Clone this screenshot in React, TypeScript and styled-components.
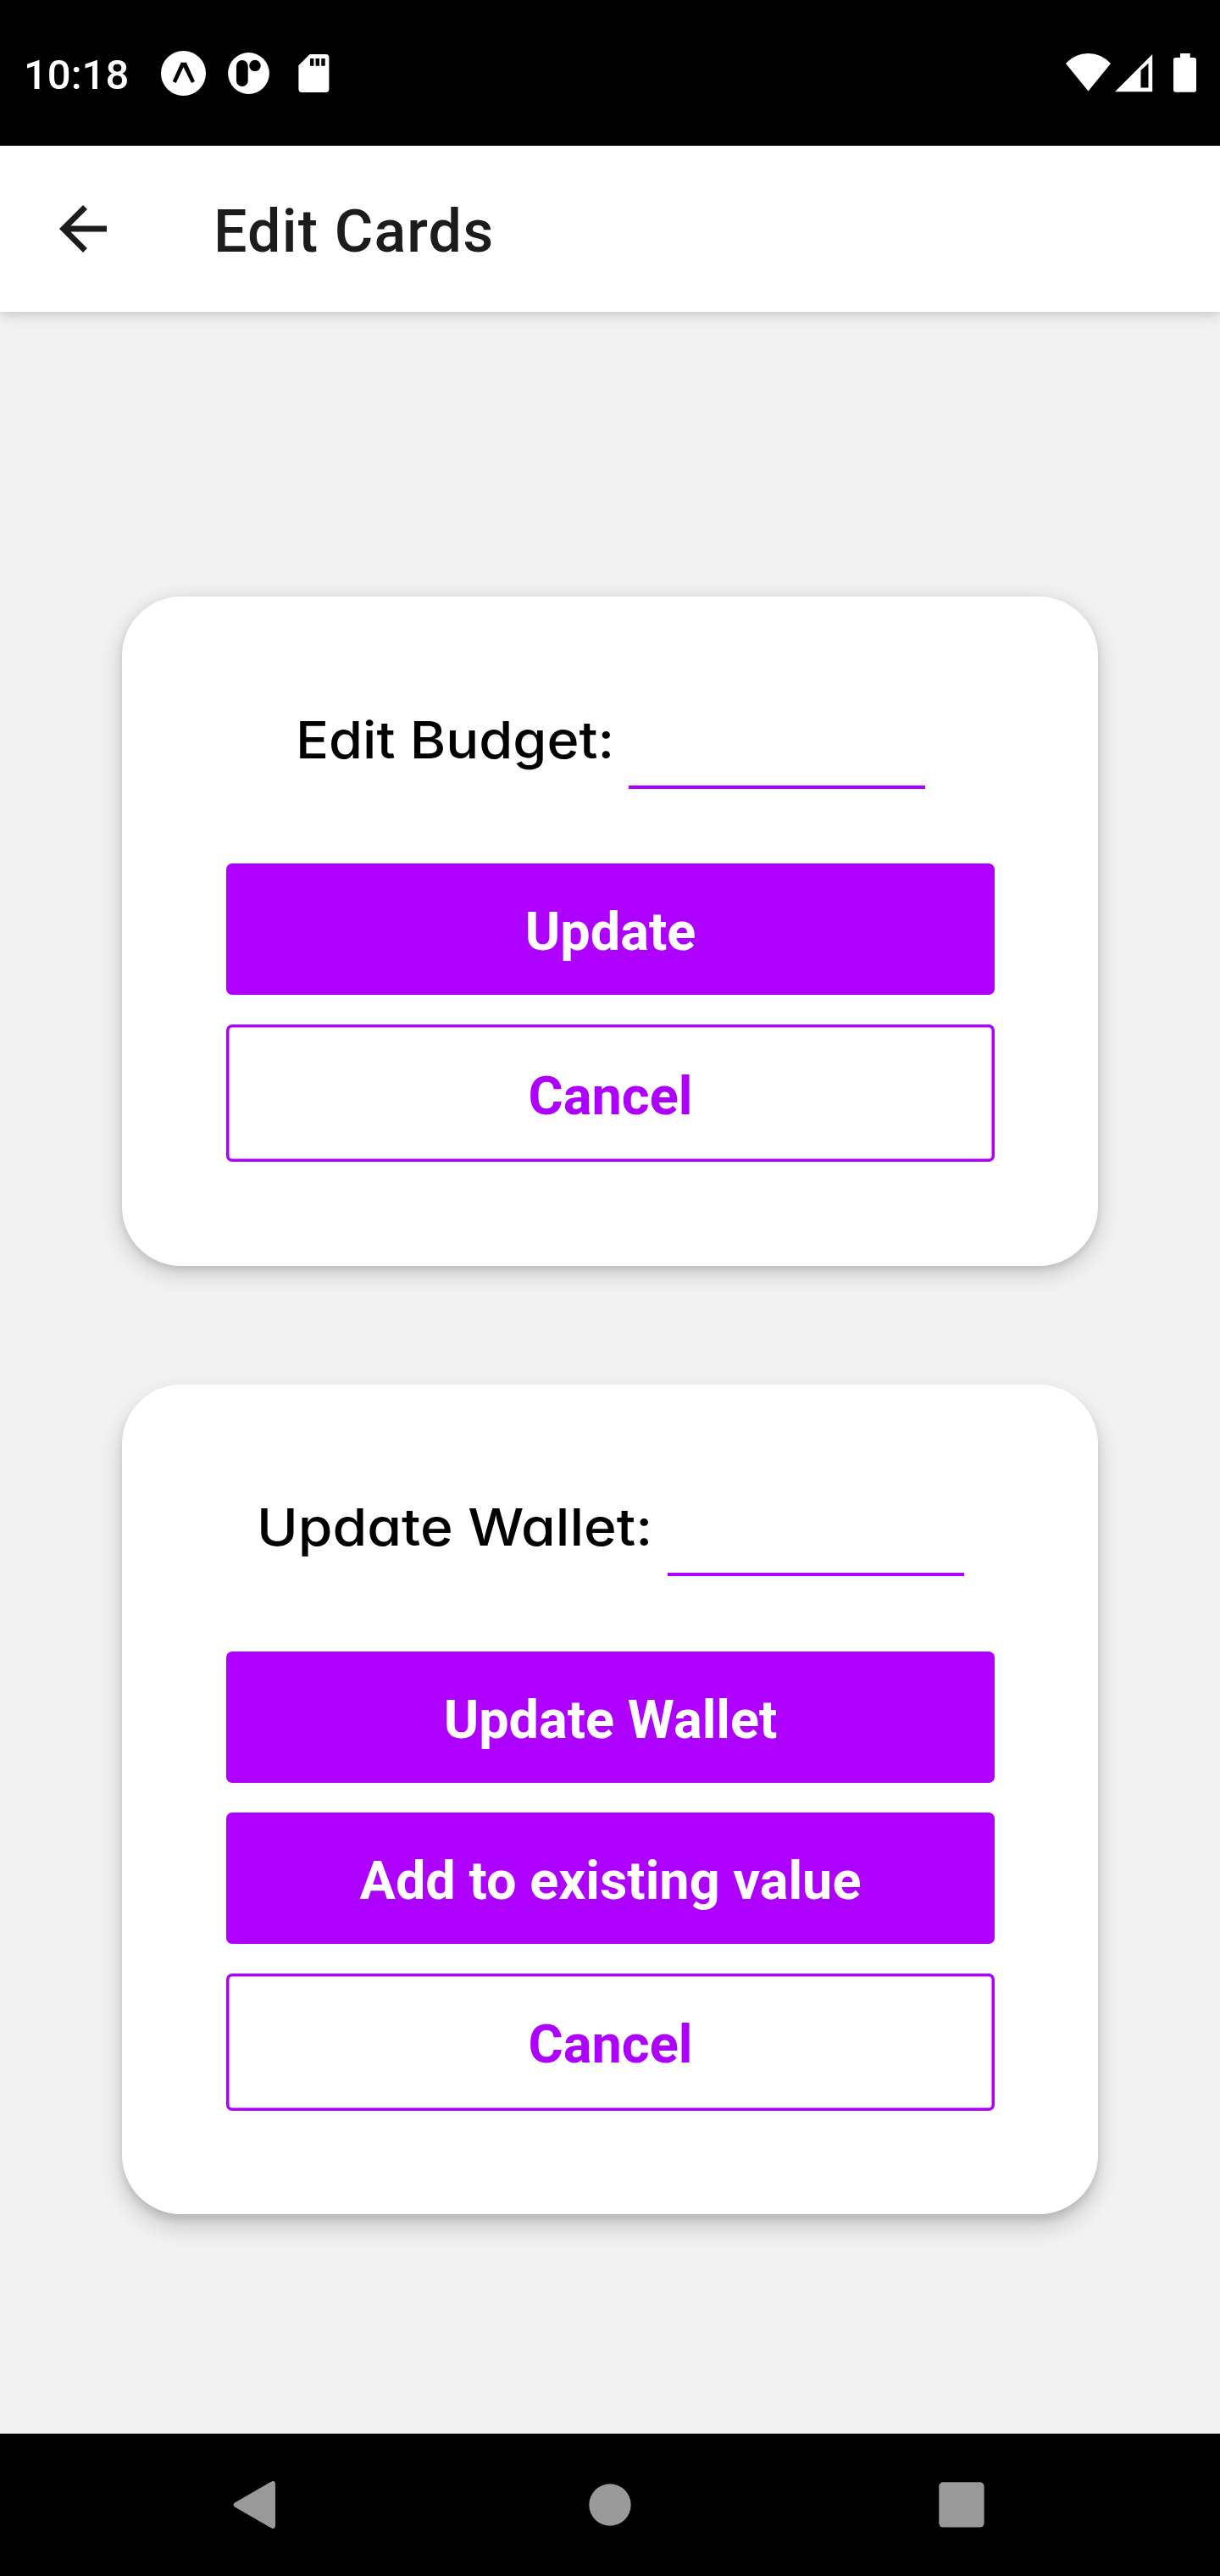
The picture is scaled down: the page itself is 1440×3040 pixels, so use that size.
import React from "react";
import styled, { createGlobalStyle } from "styled-components";

const purple = "#ad00ff";

const GlobalStyle = createGlobalStyle`
  * { box-sizing: border-box; }
  body { margin: 0; background: #f2f2f2; font-family: Roboto, sans-serif; }
`;

const Screen = styled.div`
  display: flex;
  flex-direction: column;
  width: 1440px;
  height: 3040px;
  background: #f2f2f2;
  overflow: hidden;
`;

const StatusBar = styled.div`
  display: flex;
  justify-content: space-between;
  height: 172px;
  padding: 60px 27px 0 28px;
  background: #000;
`;

const StatusGroup = styled.div`
  display: flex;
  align-items: flex-start;
`;

const Clock = styled.span`
  width: 162px;
  color: #fff;
  font-size: 49px;
  font-weight: 500;
  line-height: 57px;
`;

const Glyph = styled.svg<{ $left?: number; $top?: number }>`
  display: block;
  flex: none;
  margin-left: ${(p) => p.$left ?? 0}px;
  margin-top: ${(p) => p.$top ?? 0}px;
`;

const Header = styled.header`
  display: flex;
  align-items: center;
  height: 196px;
  padding: 0 56px;
  background: #fff;
  box-shadow: 0 4px 10px rgba(0, 0, 0, 0.1), 0 4px 20px rgba(0, 0, 0, 0.08);
`;

const BackButton = styled.button`
  display: flex;
  padding: 0;
  border: 0;
  background: none;
`;

const Title = styled.h1`
  margin: 6px 0 0 112px;
  color: #1c1c1e;
  font-size: 70px;
  font-weight: 500;
  line-height: 82px;
  letter-spacing: 1.15px;
`;

const Content = styled.main`
  display: flex;
  flex: 1;
  flex-direction: column;
  align-items: center;
  gap: 139.8px;
  padding-top: 336px;
`;

const Card = styled.section<{ $drop: number }>`
  width: 1152px;
  padding: 122.8px 122px 122.6px 123px;
  border-radius: 70px;
  background: #fff;
  box-shadow: 0 ${(p) => p.$drop}px 28px rgba(0, 0, 0, 0.18),
    0 ${(p) => p.$drop / 2}px 10px rgba(0, 0, 0, 0.1);
`;

const Field = styled.label`
  display: flex;
  justify-content: center;
  height: 104px;
  margin-bottom: 88.4px;
`;

const FieldLabel = styled.span<{ $width: number; $stretch: number }>`
  width: ${(p) => p.$width}px;
  color: #000;
  font-family: Inter, sans-serif;
  font-size: 61px;
  font-weight: 500;
  line-height: 92px;
  font-feature-settings: "cv11";
  white-space: nowrap;
  transform: scaleX(${(p) => p.$stretch});
  transform-origin: left center;
`;

const FieldInput = styled.input`
  width: 350px;
  height: 104px;
  padding: 0;
  border: 0;
  border-bottom: 4px solid ${purple};
  outline: none;
  background: transparent;
  font-size: 60px;
`;

const Actions = styled.div`
  display: flex;
  flex-direction: column;
  gap: 35px;
`;

const Button = styled.button<{ $outlined?: boolean }>`
  height: ${(p) => (p.$outlined ? 162 : 155)}px;
  padding: 7px 0 0;
  border: 0;
  border-radius: 7px;
  background: ${(p) => (p.$outlined ? "#fff" : purple)};
  box-shadow: ${(p) => (p.$outlined ? `inset 0 0 0 3.5px ${purple}` : "none")};
  color: ${(p) => (p.$outlined ? purple : "#fff")};
  font-family: Roboto, sans-serif;
  font-size: 63px;
  font-weight: 700;
  line-height: 74px;
`;

const NavBar = styled.nav`
  display: flex;
  align-items: center;
  justify-content: space-between;
  height: 168px;
  padding: 0 278px 0 275px;
  background: #000;
`;

export default function App() {
  return (
    <>
      <GlobalStyle />
      <Screen>
        <StatusBar>
          <StatusGroup>
            <Clock>10:18</Clock>
            <Glyph width="53" height="53" viewBox="0 0 53 53">
              <circle cx="26.5" cy="26.5" r="26.5" fill="#fff" />
              <path d="M23.7 13.7h6.2L40 36l-4 2-9.4-18.7L17.7 38l-4-2z" fill="#000" />
            </Glyph>
            <Glyph $left={26} $top={2} width="49" height="49" viewBox="0 0 49 49">
              <circle cx="24.5" cy="24.5" r="24.4" fill="#fff" />
              <rect x="10" y="9" width="13.7" height="31" rx="6.8" fill="#000" />
              <circle cx="32" cy="15.4" r="6.7" fill="#000" />
            </Glyph>
            <Glyph $left={34} $top={4} width="37" height="46" viewBox="0 0 37 46">
              <path d="M13.6 0H32.4Q36.4 0 36.4 4V41Q36.4 45 32.4 45H4.4Q.4 45 .4 41V13.3z" fill="#fff" />
              <path d="M14 5h4.4v8.7H14zM20.6 5H25v8.7h-4.4zM27.3 5h4.4v8.7h-4.4z" fill="#000" />
            </Glyph>
          </StatusGroup>
          <StatusGroup>
            <Glyph $top={3} width="53" height="45" viewBox="0 0 53 45">
              <path d="M0 12Q11 0 26.5 0T53 12L26.5 44.5z" fill="#fff" />
            </Glyph>
            <Glyph $left={4.5} $top={3.5} width="45" height="45" viewBox="0 0 45 45">
              <path fillRule="evenodd" d="M44.2 0V44.2H0zM30.5 19V39.5h9V10.7z" fill="#fff" />
            </Glyph>
            <Glyph $left={24.5} $top={3} width="28" height="46" viewBox="0 0 28 46">
              <path d="M8 0h11.7v5H24.3q2.7 0 2.7 2.7V43q0 2.7-2.7 2.7H2.7Q0 45.7 0 43V7.7Q0 5 2.7 5H8z" fill="#fff" />
            </Glyph>
          </StatusGroup>
        </StatusBar>
        <Header>
          <BackButton aria-label="Back">
            <Glyph width="84" height="84" viewBox="0 0 24 24">
              <path d="M20 11H7.83l5.59-5.59L12 4l-8 8 8 8 1.41-1.41L7.83 13H20v-2z" fill="#1c1c1e" />
            </Glyph>
          </BackButton>
          <Title>Edit Cards</Title>
        </Header>
        <Content>
          <Card $drop={8}>
            <Field>
              <FieldLabel $width={393} $stretch={1.062}>Edit Budget:</FieldLabel>
              <FieldInput />
            </Field>
            <Actions>
              <Button>Update</Button>
              <Button $outlined>Cancel</Button>
            </Actions>
          </Card>
          <Card $drop={14}>
            <Field>
              <FieldLabel $width={485} $stretch={1.081}>Update Wallet:</FieldLabel>
              <FieldInput />
            </Field>
            <Actions>
              <Button>Update Wallet</Button>
              <Button>Add to existing value</Button>
              <Button $outlined>Cancel</Button>
            </Actions>
          </Card>
        </Content>
        <NavBar>
          <Glyph width="51" height="56" viewBox="0 0 51 56">
            <path d="M2 25.5 45 .7Q50 -1.5 50 4V52Q50 57.5 45 55.3L2 30.5Q-1 28 2 25.5z" fill="#999" />
          </Glyph>
          <Glyph $left={6} width="50" height="50" viewBox="0 0 50 50">
            <circle cx="25" cy="25" r="24.7" fill="#999" />
          </Glyph>
          <Glyph width="54" height="54" viewBox="0 0 54 54">
            <rect x=".3" y=".3" width="53.3" height="53.3" rx="5" fill="#999" />
          </Glyph>
        </NavBar>
      </Screen>
    </>
  );
}
